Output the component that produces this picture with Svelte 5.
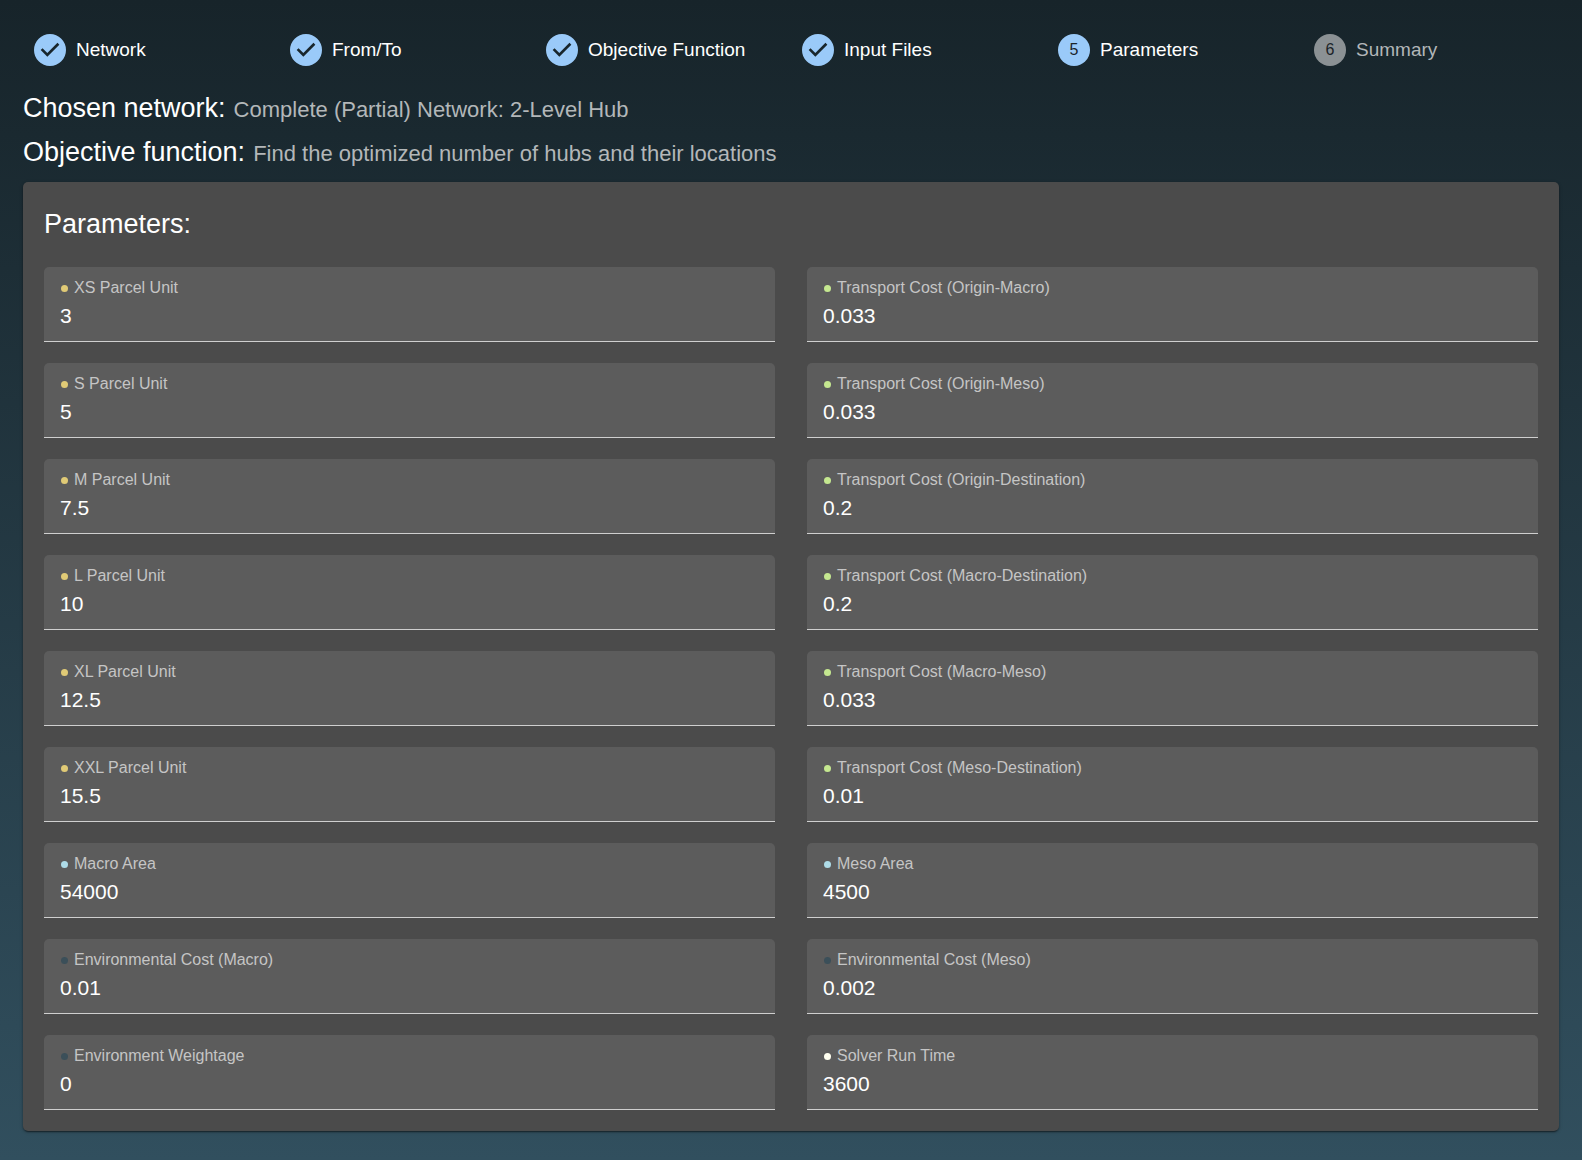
<script>
  const steps = [
    { label: 'Network', state: 'done' },
    { label: 'From/To', state: 'done' },
    { label: 'Objective Function', state: 'done' },
    { label: 'Input Files', state: 'done' },
    { label: 'Parameters', state: 'active' },
    { label: 'Summary', state: 'pending' },
  ];

  let fields = $state([
    { label: 'XS Parcel Unit', value: '3', kind: 'parcel' },
    { label: 'Transport Cost (Origin-Macro)', value: '0.033', kind: 'transport' },
    { label: 'S Parcel Unit', value: '5', kind: 'parcel' },
    { label: 'Transport Cost (Origin-Meso)', value: '0.033', kind: 'transport' },
    { label: 'M Parcel Unit', value: '7.5', kind: 'parcel' },
    { label: 'Transport Cost (Origin-Destination)', value: '0.2', kind: 'transport' },
    { label: 'L Parcel Unit', value: '10', kind: 'parcel' },
    { label: 'Transport Cost (Macro-Destination)', value: '0.2', kind: 'transport' },
    { label: 'XL Parcel Unit', value: '12.5', kind: 'parcel' },
    { label: 'Transport Cost (Macro-Meso)', value: '0.033', kind: 'transport' },
    { label: 'XXL Parcel Unit', value: '15.5', kind: 'parcel' },
    { label: 'Transport Cost (Meso-Destination)', value: '0.01', kind: 'transport' },
    { label: 'Macro Area', value: '54000', kind: 'area' },
    { label: 'Meso Area', value: '4500', kind: 'area' },
    { label: 'Environmental Cost (Macro)', value: '0.01', kind: 'environment' },
    { label: 'Environmental Cost (Meso)', value: '0.002', kind: 'environment' },
    { label: 'Environment Weightage', value: '0', kind: 'environment' },
    { label: 'Solver Run Time', value: '3600', kind: 'solver' },
  ]);
</script>

<main class="page">
  <ol class="stepper">
    {#each steps as step, i}
      <li class="step {step.state}" aria-current={step.state === 'active' ? 'step' : undefined}>
        {#if step.state === 'done'}
          <svg class="badge" viewBox="0 0 24 24" aria-hidden="true">
            <path d="M12 0a12 12 0 1 0 0 24 12 12 0 0 0 0-24zm-2 17l-5-5 1.4-1.4 3.6 3.6 7.6-7.6L19 8l-9 9z" />
          </svg>
        {:else}
          <span class="badge number">{i + 1}</span>
        {/if}
        <span>{step.label}</span>
      </li>
    {/each}
  </ol>

  <dl class="summary">
    <div class="line">
      <dt>Chosen network:</dt>
      <dd>Complete (Partial) Network: 2-Level Hub</dd>
    </div>
    <div class="line">
      <dt>Objective function:</dt>
      <dd>Find the optimized number of hubs and their locations</dd>
    </div>
  </dl>

  <form class="card">
    <h2>Parameters:</h2>
    <div class="grid">
      {#each fields as field, i}
        <div class="field">
          <label for="field-{i}"><span class="dot {field.kind}"></span>{field.label}</label>
          <input id="field-{i}" type="text" inputmode="decimal" bind:value={field.value} />
        </div>
      {/each}
    </div>
  </form>
</main>

<style>
  :global(body) {
    margin: 0;
  }

  .page {
    box-sizing: border-box;
    min-height: 100vh;
    padding: 23px 23px 29px;
    background: linear-gradient(#17242a, #314f5e);
    color: #fff;
    font-family: 'Liberation Sans', Helvetica, Arial, sans-serif;
  }

  .stepper {
    display: grid;
    grid-template-columns: repeat(6, 1fr);
    margin: 0;
    padding: 0;
    list-style: none;
  }

  .step {
    display: flex;
    align-items: center;
    gap: 10px;
    padding: 11px;
    font-size: 19px;
    line-height: 26px;
  }

  .badge {
    flex: none;
    width: 32px;
    height: 32px;
    fill: #9acaf9;
  }

  .number {
    border-radius: 50%;
    background: #9acaf9;
    color: #1b2429;
    font-size: 16px;
    line-height: 32px;
    text-align: center;
  }

  .pending {
    color: #b2b6b8;
  }

  .pending .number {
    background: #8b9194;
  }

  .summary {
    margin: 14px 0 0;
  }

  .line {
    display: flex;
    align-items: baseline;
    gap: 8px;
    padding-bottom: 8px;
    line-height: 35px;
  }

  dt {
    font-size: 27px;
  }

  dd {
    margin: 0;
    color: #b3b7b9;
    font-size: 22px;
  }

  .card {
    margin-top: 3px;
    padding: 21px;
    border-radius: 5px;
    background: #4b4b4b;
    box-shadow:
      0 3px 1px -2px rgba(0, 0, 0, 0.2),
      0 1px 2px rgba(0, 0, 0, 0.4),
      0 1px 4px rgba(0, 0, 0, 0.12);
  }

  h2 {
    margin: 0 0 21px;
    font-size: 27px;
    font-weight: 400;
    line-height: 43px;
  }

  .grid {
    display: grid;
    grid-template-columns: 1fr 1fr;
    gap: 21px 32px;
  }

  .field {
    display: flex;
    flex-direction: column;
    padding: 10px 16px 9px;
    border-bottom: 1px solid #cfcfcf;
    border-radius: 5px 5px 0 0;
    background: #5c5c5c;
  }

  label {
    display: flex;
    align-items: center;
    gap: 6px;
    padding-left: 1px;
    color: #c5c5c5;
    font-size: 16px;
    line-height: 22px;
  }

  .dot {
    width: 7px;
    height: 7px;
    border-radius: 50%;
  }

  .parcel {
    background: #e0ca76;
  }

  .transport {
    background: #c5e890;
  }

  .area {
    background: #aedce8;
  }

  .environment {
    background: #3b4f59;
  }

  .solver {
    background: #fffff0;
  }

  input {
    width: 100%;
    height: 33px;
    padding: 0;
    border: 0;
    outline: 0;
    background: none;
    color: #fff;
    font: 21px 'Liberation Sans', Helvetica, Arial, sans-serif;
  }
</style>
